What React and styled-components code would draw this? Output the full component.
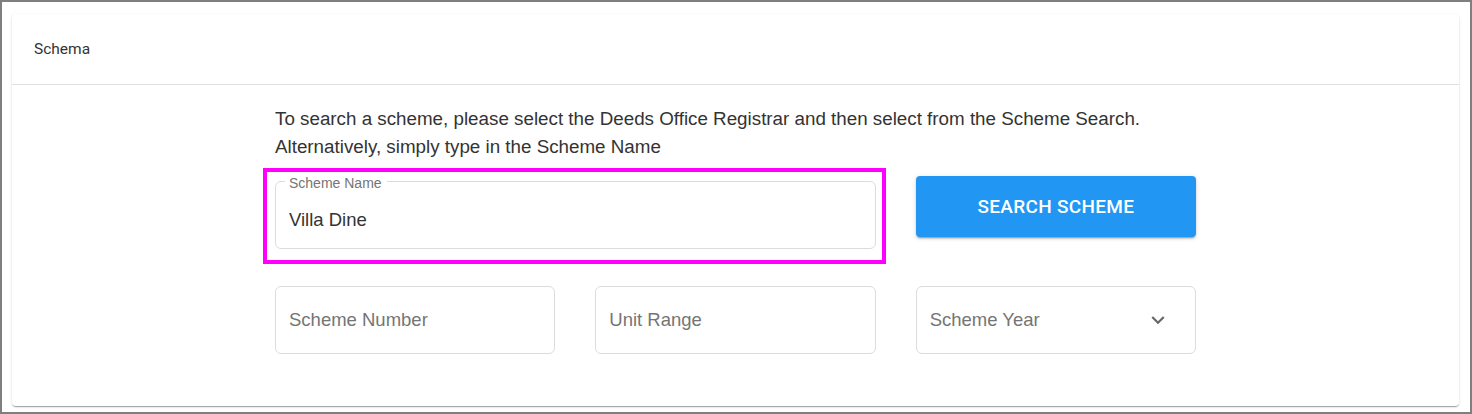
import React from 'react';
import styled, { createGlobalStyle } from 'styled-components';

const Global = createGlobalStyle`
  * {
    box-sizing: border-box;
  }
  body {
    margin: 0;
    background: #ffffff;
    font-family: "Liberation Sans", Arial, sans-serif;
  }
`;

const Frame = styled.div`
  height: 414px;
  border: 2px solid #7f7f7f;
  padding: 12px 11px 0 10px;
  background: #ffffff;
`;

const Card = styled.div`
  height: 392px;
  background: #ffffff;
  border-radius: 4px;
  box-shadow: 0 2px 1px -1px rgba(0, 0, 0, 0.2), 0 1px 1px 0 rgba(0, 0, 0, 0.14),
    0 1px 3px 0 rgba(0, 0, 0, 0.12);
  display: flex;
  flex-direction: column;
`;

const CardHeader = styled.div`
  height: 71px;
  border-bottom: 1px solid #e0e0e0;
  display: flex;
  align-items: center;
  padding-left: 22px;
  font-family: Roboto, "Liberation Sans", sans-serif;
  font-size: 15.5px;
  color: #333333;
`;

const CardBody = styled.div`
  padding-top: 20px;
`;

const Content = styled.div`
  width: 921px;
  margin: 0 auto;
`;

const Intro = styled.p`
  margin: 0;
  font-size: 18.8px;
  line-height: 28px;
  color: #333333;
`;

const FormGrid = styled.div`
  margin-top: 12px;
  display: grid;
  grid-template-columns: repeat(3, 1fr);
  column-gap: 40px;
  row-gap: 37px;
  align-items: start;
`;

const Highlight = styled.div`
  grid-column: span 2;
  position: relative;

  &::after {
    content: '';
    position: absolute;
    top: -5px;
    left: -12px;
    right: -10px;
    bottom: -15px;
    border: 4px solid #ff00ff;
    pointer-events: none;
  }
`;

const Outlined = styled.fieldset`
  margin: 0;
  min-width: 0;
  height: 76px;
  padding: 0 13px;
  border: 1px solid #dcdcdc;
  border-radius: 6px;
`;

const Legend = styled.legend`
  margin-left: -4px;
  padding: 3px 5px 0 4px;
  font-size: 14px;
  line-height: 14px;
  color: #757575;
`;

const Value = styled.div`
  padding-top: 19px;
  font-size: 18.5px;
  line-height: 22px;
  color: #333333;
`;

const Field = styled.div`
  height: 68px;
  border: 1px solid #dcdcdc;
  border-radius: 6px;
  padding: 0 ${(p) => (p.$select ? '24px' : '13px')} 0 13px;
  display: flex;
  align-items: center;
  justify-content: space-between;
  font-size: 18.5px;
  color: #757575;
`;

const SearchButton = styled.button`
  margin-top: 3px;
  height: 61px;
  border: none;
  border-radius: 4px;
  background: #2196f3;
  color: #ffffff;
  font-family: Roboto, "Liberation Sans", sans-serif;
  font-weight: 500;
  font-size: 19px;
  letter-spacing: 0.3px;
  text-transform: uppercase;
  padding-bottom: 2px;
  box-shadow: 0 3px 1px -2px rgba(0, 0, 0, 0.2), 0 2px 2px 0 rgba(0, 0, 0, 0.14),
    0 1px 5px 0 rgba(0, 0, 0, 0.12);
  cursor: pointer;
`;

const Chevron = () => (
  <svg width="26" height="26" viewBox="0 0 24 24" fill="#666666">
    <path d="M16.59 8.59 12 13.17 7.41 8.59 6 10l6 6 6-6z" />
  </svg>
);

const App = () => {
  return (
    <>
      <Global />
      <Frame>
        <Card>
          <CardHeader>Schema</CardHeader>
          <CardBody>
            <Content>
              <Intro>
                To search a scheme, please select the Deeds Office Registrar and then select from the Scheme Search.
                <br />
                Alternatively, simply type in the Scheme Name
              </Intro>
              <FormGrid>
                <Highlight>
                  <Outlined>
                    <Legend>Scheme Name</Legend>
                    <Value>Villa Dine</Value>
                  </Outlined>
                </Highlight>
                <SearchButton>Search Scheme</SearchButton>
                <Field>Scheme Number</Field>
                <Field>Unit Range</Field>
                <Field $select>
                  Scheme Year
                  <Chevron />
                </Field>
              </FormGrid>
            </Content>
          </CardBody>
        </Card>
      </Frame>
    </>
  );
};

export default App;
